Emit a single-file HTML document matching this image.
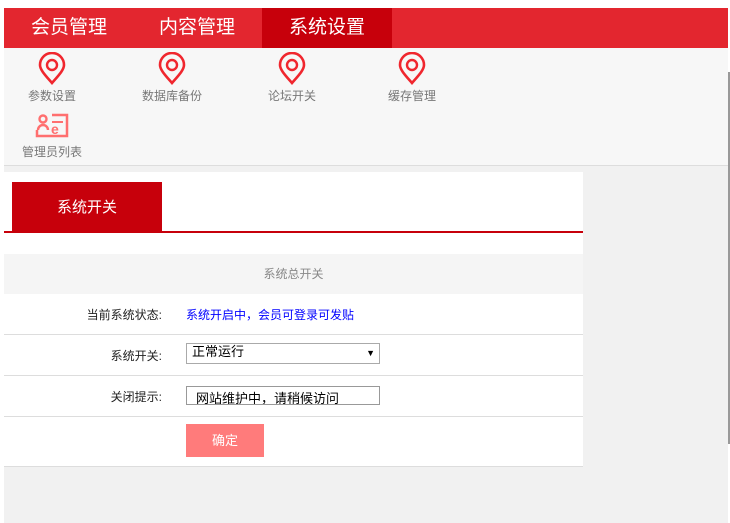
<!DOCTYPE html>
<html><head><meta charset="utf-8"><style>
*{margin:0;padding:0;box-sizing:border-box}
body{width:730px;height:523px;background:#fff;font-family:"Liberation Sans","Noto Sans CJK SC",sans-serif;position:relative;overflow:hidden}
.wrap{position:absolute;left:4px;top:8px;width:724px;height:515px;background:#f1f1f1}
.sb{position:absolute;left:728px;top:72px;width:2px;height:372px;background:#999}
.nav{position:absolute;left:0;top:0;width:724px;height:40px;background:#e3262f}
.nav div{position:absolute;top:0;height:40px;line-height:40px;color:#fff;font-size:19px;text-align:center;width:130px}
.icons{position:absolute;left:0;top:40px;width:724px;height:118px;background:#f7f7f7;border-bottom:1px solid #ddd}
.it{position:absolute;width:100px;text-align:center;font-size:12px;color:#777}
.it svg{display:block;margin:0 auto}
.box{position:absolute;left:0;top:164px;width:579px;height:294px;background:#fff}
.tab{position:absolute;left:8px;top:10px;width:150px;height:50px;background:#c7000b;color:#fff;font-size:15px;text-align:center;line-height:52px}
.line{position:absolute;left:0;top:59px;width:579px;height:2px;background:#c7000b}
.hd{position:absolute;left:0;top:82px;width:579px;height:40px;background:#f5f5f5;color:#888;font-size:12px;text-align:center;line-height:40px}
.row{position:absolute;left:0;width:579px;border-bottom:1px solid #ddd;font-size:12px}
.lb{position:absolute;right:421px;color:#222}
</style></head><body>
<div class="wrap">
<div class="nav">
<div style="left:0">会员管理</div>
<div style="left:128px">内容管理</div>
<div style="left:258px;background:#c7000b">系统设置</div>
</div>
<div class="icons">
<div class="it" style="left:-2px;top:4px"><svg width="30" height="33" viewBox="0 0 30 33"><path d="M15 31 C9 24 3 18 3 13 A12 12 0 0 1 27 13 C27 18 21 24 15 31Z" fill="none" stroke="#f0262e" stroke-width="2.6"/><circle cx="15" cy="13" r="5" fill="none" stroke="#f0262e" stroke-width="2.4"/></svg><div style="margin-top:2px">参数设置</div></div>
<div class="it" style="left:118px;top:4px"><svg width="30" height="33" viewBox="0 0 30 33"><path d="M15 31 C9 24 3 18 3 13 A12 12 0 0 1 27 13 C27 18 21 24 15 31Z" fill="none" stroke="#f0262e" stroke-width="2.6"/><circle cx="15" cy="13" r="5" fill="none" stroke="#f0262e" stroke-width="2.4"/></svg><div style="margin-top:2px">数据库备份</div></div>
<div class="it" style="left:238px;top:4px"><svg width="30" height="33" viewBox="0 0 30 33"><path d="M15 31 C9 24 3 18 3 13 A12 12 0 0 1 27 13 C27 18 21 24 15 31Z" fill="none" stroke="#f0262e" stroke-width="2.6"/><circle cx="15" cy="13" r="5" fill="none" stroke="#f0262e" stroke-width="2.4"/></svg><div style="margin-top:2px">论坛开关</div></div>
<div class="it" style="left:358px;top:4px"><svg width="30" height="33" viewBox="0 0 30 33"><path d="M15 31 C9 24 3 18 3 13 A12 12 0 0 1 27 13 C27 18 21 24 15 31Z" fill="none" stroke="#f0262e" stroke-width="2.6"/><circle cx="15" cy="13" r="5" fill="none" stroke="#f0262e" stroke-width="2.4"/></svg><div style="margin-top:2px">缓存管理</div></div>
<div class="it" style="left:-2px;top:64px"><svg width="34" height="28" viewBox="0 0 34 28"><path d="M2 18 V24 H32 V3 H17" fill="none" stroke="#ff6f6f" stroke-width="2.5"/><circle cx="8" cy="7" r="3.5" fill="none" stroke="#ff6f6f" stroke-width="2.4"/><path d="M3 18 A5 5 0 0 1 13 18" fill="none" stroke="#ff6f6f" stroke-width="2.4"/><text x="16" y="22" font-size="14" font-weight="bold" fill="#ff6f6f" font-family="Liberation Sans">e</text><path d="M17 10 H28" stroke="#ff6f6f" stroke-width="2"/></svg><div style="margin-top:3px">管理员列表</div></div>
</div>
<div class="box">
<div class="tab">系统开关</div>
<div class="line"></div>
<div class="hd">系统总开关</div>
<div class="row" style="top:122px;height:41px"><span class="lb" style="top:12px">当前系统状态:</span><span style="position:absolute;left:182px;top:12px;color:#00f">系统开启中，会员可登录可发贴</span></div>
<div class="row" style="top:163px;height:41px"><span class="lb" style="top:12px">系统开关:</span><div style="position:absolute;left:182px;top:8px;width:194px;height:21px;border:1px solid #aaa;font-size:13px;padding:0 5px;line-height:16px;color:#000">正常运行<span style="position:absolute;right:4px;top:5px;font-size:9px;line-height:9px">▼</span></div></div>
<div class="row" style="top:204px;height:41px"><span class="lb" style="top:12px">关闭提示:</span><div style="position:absolute;left:182px;top:10px;width:194px;height:19px;border:1px solid #999;font-size:13px;padding:5px 0 0 9px;overflow:hidden;line-height:14px;color:#000">网站维护中，请稍候访问</div></div>
<div class="row" style="top:245px;height:50px"><div style="position:absolute;left:182px;top:7px;width:78px;height:33px;background:#ff7b7b;color:#fff;text-align:center;line-height:33px;font-size:13px">确定</div></div>
</div>
</div>
<div class="sb"></div>
</body></html>
